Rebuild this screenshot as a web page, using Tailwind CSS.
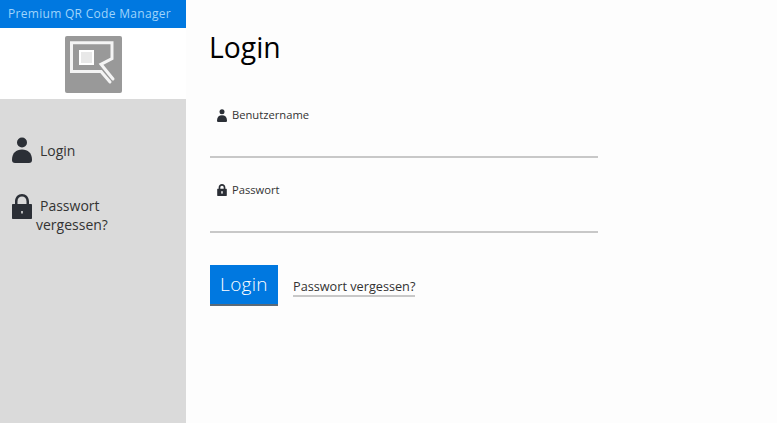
<!DOCTYPE html>
<html lang="de">
<head>
  <meta charset="UTF-8" />
  <title>Login</title>
  <script src="https://cdn.jsdelivr.net/npm/@tailwindcss/browser@4"></script>
</head>
<body class="bg-white h-[423px] overflow-hidden font-['Open_Sans','Noto_Sans',sans-serif]">
  <div class="flex h-[423px]">

    <!-- Sidebar -->
    <aside class="w-[186px] shrink-0 flex flex-col bg-[#dadada]">
      <div class="h-7 bg-[#0078e0] text-[#9fd4fb] text-[12px] tracking-[0.3px] leading-7 pl-2 whitespace-nowrap">Premium QR Code Manager</div>
      <div class="h-[71px] bg-white flex items-center justify-center">
        <svg width="57" height="57" viewBox="0 0 57 57" class="mt-[1px]">
          <rect width="57" height="57" rx="2" fill="#999999"/>
          <path d="M36 35.500 H6.500 V6.800 H47 V22.700 L36 28.300 L48 43" fill="none" stroke="#f4f4f4" stroke-width="3" stroke-linecap="round"/>
          <path d="M36 35.500 L45 46" fill="none" stroke="#f4f4f4" stroke-width="3" stroke-linecap="round"/>
          <rect x="15" y="15" width="13" height="13" fill="#e8e8e8" stroke="#ffffff" stroke-width="2"/>
        </svg>
      </div>
      <nav class="pt-[37px] text-[#333] text-[14px]">
        <a class="flex items-center gap-[8px] pl-3 h-7">
          <svg width="20" height="26" viewBox="0 0 20 26" fill="#2b2f36"><circle cx="10" cy="5.500" r="5"/><path d="M0 23 C0 16 4 12.500 10 12.500 C16 12.500 20 16 20 23 C20 25 19 26 17 26 H3 C1 26 0 25 0 23 Z"/></svg>
          <span>Login</span>
        </a>
        <a class="block mt-[30px] pl-3 relative h-12">
          <span class="flex items-start gap-[8px]">
            <svg width="20" height="25" viewBox="0 0 20 25" fill="#2b2f36"><path d="M1 10 H3 V7.500 C3 3 6 0 10 0 C14 0 17 3 17 7.500 V10 H19 C19.600 10 20 10.400 20 11 V24 C20 24.600 19.600 25 19 25 H1 C0.400 25 0 24.600 0 24 V11 C0 10.400 0.400 10 1 10 Z M5.500 10 H14.500 V7.500 C14.500 4 12.500 2.400 10 2.400 C7.500 2.400 5.500 4 5.500 7.500 Z"/><rect x="9.200" y="17" width="1.600" height="2.500" fill="#dadada"/></svg>
            <span class="pt-[1px]">Passwort</span>
          </span>
          <span class="block pl-6 -mt-[5px]">vergessen?</span>
        </a>
      </nav>
    </aside>

    <!-- Login form -->
    <main class="flex-1 pl-[24px] bg-[#fdfdfd]">
      <h1 class="text-[28.300px] leading-10 text-black pt-[27px] box-content -ml-[1px]">Login</h1>
      <form class="w-[388px] mt-[39px] text-[#333] text-[11.200px]">
        <label class="flex items-center gap-[5px] pl-[7px] h-[18px]">
          <svg width="10" height="13" viewBox="0 0 20 26" fill="#2b2f36"><circle cx="10" cy="5.500" r="5"/><path d="M0 23 C0 16 4 12.500 10 12.500 C16 12.500 20 16 20 23 C20 25 19 26 17 26 H3 C1 26 0 25 0 23 Z"/></svg>
          Benutzername
        </label>
        <div class="h-[34px] border-b-2 border-[#c8c8c8]"></div>
        <label class="flex items-center gap-[5px] pl-[7px] h-[18px] mt-[23px]">
          <svg width="10" height="12" viewBox="0 0 20 25" fill="#2b2f36"><path d="M1 10 H3 V7.500 C3 3 6 0 10 0 C14 0 17 3 17 7.500 V10 H19 C19.600 10 20 10.400 20 11 V24 C20 24.600 19.600 25 19 25 H1 C0.400 25 0 24.600 0 24 V11 C0 10.400 0.400 10 1 10 Z M6.500 10 H13.500 V7.500 C13.500 5 12 3.500 10 3.500 C8 3.500 6.500 5 6.500 7.500 Z"/><rect x="8.500" y="15" width="3" height="5" fill="#fdfdfd"/></svg>
          Passwort
        </label>
        <div class="h-[34px] border-b-2 border-[#c8c8c8]"></div>
        <div class="flex items-center gap-[15px] mt-[32px]">
          <button type="button" class="w-[68px] h-[41px] bg-[#0078e0] border-b-2 border-[#5a6a78] text-white text-[19px] tracking-[0.3px] font-light">Login</button>
          <a class="border-b-2 border-[#c8c8c8] text-[12.700px] leading-[18px] mt-[3px] text-[#333]">Passwort vergessen?</a>
        </div>
      </form>
    </main>

  </div>
</body>
</html>
